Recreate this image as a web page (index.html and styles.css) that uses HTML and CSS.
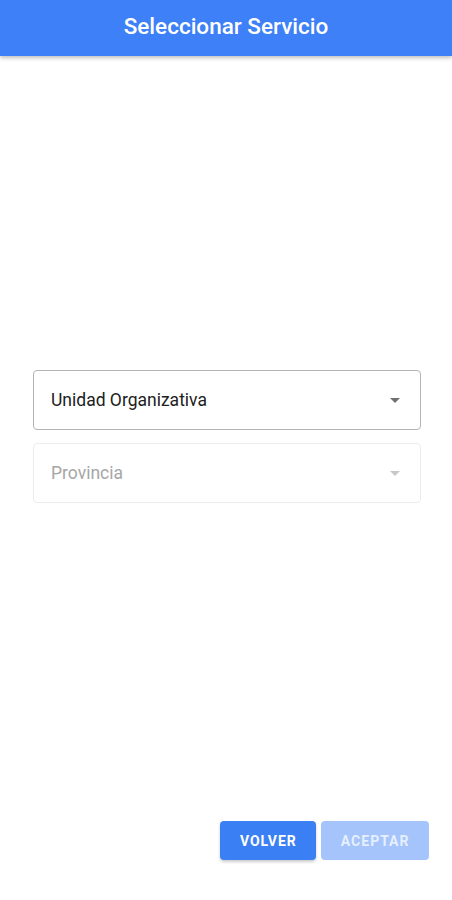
FILE: index.html
```html
<!DOCTYPE html>
<html lang="es">
  <head>
    <meta charset="UTF-8" />
    <meta name="viewport" content="width=device-width, initial-scale=1.0" />
    <title>Seleccionar Servicio</title>
    <link rel="stylesheet" href="styles.css">
  </head>
  <body>
    <header class="app-bar">
      <h1>Seleccionar Servicio</h1>
    </header>

    <main class="form-area">
      <div class="select-field">
        <span>Unidad Organizativa</span>
        <span class="arrow"></span>
      </div>
      <div class="select-field disabled">
        <span>Provincia</span>
        <span class="arrow"></span>
      </div>
    </main>

    <div class="actions">
      <button class="btn">Volver</button>
      <button class="btn disabled">Aceptar</button>
    </div>
  </body>
</html>
```

FILE: styles.css
```css
* {
  font-family: Roboto, "Liberation Sans", sans-serif;
  margin: 0;
  padding: 0;
  box-sizing: border-box;
}

body {
  display: flex;
  flex-direction: column;
  height: 900px;
  background: #fff;
}

.app-bar {
  height: 56px;
  background: #3d80f8;
  display: flex;
  justify-content: center;
  align-items: center;
  padding-bottom: 5px;
  box-shadow: 0 2px 4px rgba(0, 0, 0, 0.25);
  position: relative;
  z-index: 1;
}

.app-bar h1 {
  color: #fff;
  font-size: 22.5px;
  font-weight: 500;
}

.form-area {
  flex: 1;
  display: flex;
  flex-direction: column;
  justify-content: center;
  gap: 13px;
  padding: 0 31px 4px 33px;
}

.select-field {
  height: 60px;
  border: 1px solid #b3b3b3;
  border-radius: 4px;
  display: flex;
  justify-content: space-between;
  align-items: center;
  padding: 0 20px 0 17px;
  font-size: 17.5px;
  color: #212121;
}

.select-field .arrow {
  width: 0;
  height: 0;
  border-left: 5px solid transparent;
  border-right: 5px solid transparent;
  border-top: 5px solid #707070;
}

.select-field.disabled {
  border-color: #ececec;
  color: #a6a6a6;
}

.select-field.disabled .arrow {
  border-top-color: #c8c8c8;
}

.actions {
  display: flex;
  justify-content: flex-end;
  gap: 5px;
  padding: 0 23px 40px 0;
}

.btn {
  height: 39px;
  padding: 0 19.5px;
  border: none;
  border-radius: 4px;
  background: #3b7ff5;
  color: #fff;
  font-size: 14px;
  font-weight: 700;
  letter-spacing: 1px;
  text-transform: uppercase;
  box-shadow: 0 2px 3px rgba(0, 0, 0, 0.2);
}

.btn.disabled {
  background: #a4c4fb;
  color: #e6effe;
  box-shadow: none;
}
```
